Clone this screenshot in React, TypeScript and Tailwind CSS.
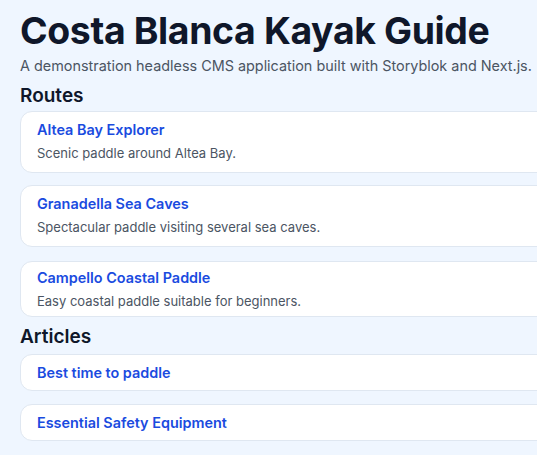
const routes = [
  { title: "Altea Bay Explorer", text: "Scenic paddle around Altea Bay.", extra: "" },
  { title: "Granadella Sea Caves", text: "Spectacular paddle visiting several sea caves.", extra: "" },
  { title: "Campello Coastal Paddle", text: "Easy coastal paddle suitable for beginners.", extra: "mt-[2px] !pt-[6px] !pb-[5px]" },
];

const articles = ["Best time to paddle", "Essential Safety Equipment"];

export default function App() {
  return (
    <div className="h-screen overflow-hidden bg-[#eff6ff] font-['Inter',sans-serif] text-[#0f172a]">
      <main className="w-[640px] px-5 pt-[11px]">
        <h1 className="text-[37.4px] leading-[40px] font-bold tracking-[-0.01em]">Costa Blanca Kayak Guide</h1>
        <p className="mt-[5px] text-[14.4px] leading-5 text-[#4b5563]">
          A demonstration headless CMS application built with Storyblok and Next.js.
        </p>

        <h2 className="mt-[8px] text-[19px] leading-6 font-semibold">Routes</h2>
        <ul className="mt-[3px] flex flex-col gap-3">
          {routes.map((r) => (
            <li key={r.title} className={`rounded-xl border border-[#dfe7f1] bg-white px-4 pt-2 pb-[9px] ${r.extra}`}>
              <a href="#" className="block text-[14.4px] leading-5 font-semibold text-[#1a4bdf]">
                {r.title}
              </a>
              <p className="mt-[3px] text-[13px] leading-5 text-[#4b5563]">{r.text}</p>
            </li>
          ))}
        </ul>

        <h2 className="mt-[8px] text-[19px] leading-6 font-semibold">Articles</h2>
        <ul className="mt-[5px] flex flex-col gap-[13px]">
          {articles.map((a) => (
            <li key={a} className="rounded-xl border border-[#dfe7f1] bg-white px-4 pt-2 pb-[7px]">
              <a href="#" className="block text-[14.4px] leading-5 font-semibold text-[#1a4bdf]">
                {a}
              </a>
            </li>
          ))}
        </ul>
      </main>
    </div>
  );
}
